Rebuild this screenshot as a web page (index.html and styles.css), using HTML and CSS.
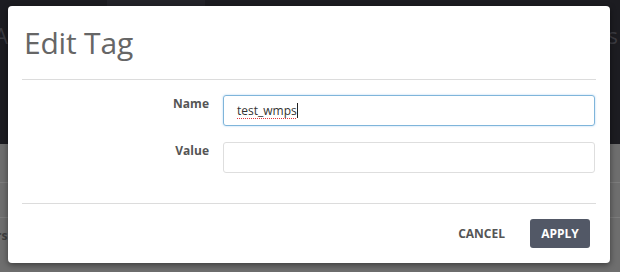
FILE: index.html
```html
<!DOCTYPE html>
<html>
<head>
<meta charset="utf-8">
<link rel="stylesheet" href="styles.css">
</head>
<body>
<div class="backdrop">
  <div class="bg-top">
    <div class="bg-tab"></div>
    <div class="bg-row">
      <span class="bg-text">A</span>
      <span class="bg-text">s</span>
    </div>
  </div>
  <div class="bg-bottom">
    <div class="bg-line"></div>
    <div class="bg-row2"></div>
    <div class="bg-line"></div>
    <div class="bg-row3"><span class="bg-text2">rs</span></div>
  </div>
</div>

<div class="modal">
  <div class="modal-header">
    <h1 class="title">Edit Tag</h1>
  </div>
  <div class="sep"></div>
  <div class="modal-body">
    <div class="field">
      <label class="label">Name</label>
      <div class="input focused"><span class="typed">test_wmps</span><span class="caret"></span></div>
    </div>
    <div class="field">
      <label class="label">Value</label>
      <div class="input"></div>
    </div>
  </div>
  <div class="sep"></div>
  <div class="modal-footer">
    <button class="btn btn-link">CANCEL</button>
    <button class="btn btn-primary">APPLY</button>
  </div>
</div>
</body>
</html>
```

FILE: styles.css
```css
* { box-sizing: border-box; }
html, body {
  margin: 0;
  padding: 0;
  width: 620px;
  height: 272px;
  overflow: hidden;
  font-family: "Open Sans", "Liberation Sans", sans-serif;
}
.backdrop {
  width: 620px;
  height: 272px;
  display: flex;
  flex-direction: column;
}
.bg-top {
  height: 144px;
  background: #1c1c21;
  position: relative;
}
.bg-tab {
  position: absolute;
  left: 107px;
  top: 0;
  width: 98px;
  height: 6px;
  background: #232329;
}
.bg-row {
  display: flex;
  justify-content: space-between;
  padding: 20px 2px 0 0;
  margin-left: -6px;
}
.bg-text {
  color: #3a3a40;
  font-size: 22px;
}
.bg-bottom {
  flex: 1;
  background: #6e6e6e;
  padding-top: 38px;
}
.bg-line {
  height: 1px;
  background: #7c7c7c;
}
.bg-row2 {
  height: 34px;
}
.bg-row3 {
  height: 34px;
  display: flex;
  align-items: center;
  margin-left: -4px;
}
.bg-text2 {
  color: #3e3e3e;
  font-size: 12px;
  font-weight: 700;
}

.modal {
  position: absolute;
  left: 8px;
  top: 6px;
  width: 602px;
  height: 257px;
  background: #fff;
  border-radius: 4px;
  box-shadow: 0 2px 6px rgba(0,0,0,0.45);
  display: flex;
  flex-direction: column;
}
.modal-header {
  height: 73px;
  padding: 15px 16px 0;
}
.title {
  margin: 0;
  font-size: 30px;
  font-weight: 400;
  line-height: 44px;
  color: #666;
  letter-spacing: -0.2px;
}
.sep {
  height: 1px;
  background: #dcdcdc;
  margin: 0 14px;
}
.modal-body {
  height: 123px;
  padding: 15px 15px 0 0;
  display: flex;
  flex-direction: column;
  gap: 16px;
}
.field {
  display: flex;
  gap: 14px;
}
.label {
  width: 201px;
  text-align: right;
  font-size: 12px;
  font-weight: 700;
  color: #555;
  padding-top: 1px;
  line-height: 16px;
}
.input {
  flex: 1;
  height: 31px;
  border: 1px solid #dedede;
  border-radius: 3px;
  padding: 0 13px;
  display: flex;
  align-items: center;
  font-size: 12px;
  color: #333;
}
.input.focused {
  border-color: #7fb5da;
  box-shadow: 0 0 2px rgba(102,175,233,0.6);
}
.typed {
  text-decoration: underline dotted #e0383e;
  text-decoration-thickness: 1px;
  text-underline-offset: 3px;
}
.caret {
  width: 1px;
  height: 15px;
  background: #222;
}
.modal-footer {
  flex: 1;
  display: flex;
  justify-content: flex-end;
  align-items: flex-start;
  padding: 15px 20px 0 0;
  gap: 13px;
}
.btn {
  font-family: "Open Sans", "Liberation Sans", sans-serif;
  font-size: 12px;
  font-weight: 700;
  height: 29px;
  border: 0;
  border-radius: 3px;
  padding: 0 12px;
  cursor: pointer;
}
.btn-link {
  background: transparent;
  color: #555;
}
.btn-primary {
  background: #525866;
  color: #fff;
  width: 60px;
  padding: 0;
}
```
